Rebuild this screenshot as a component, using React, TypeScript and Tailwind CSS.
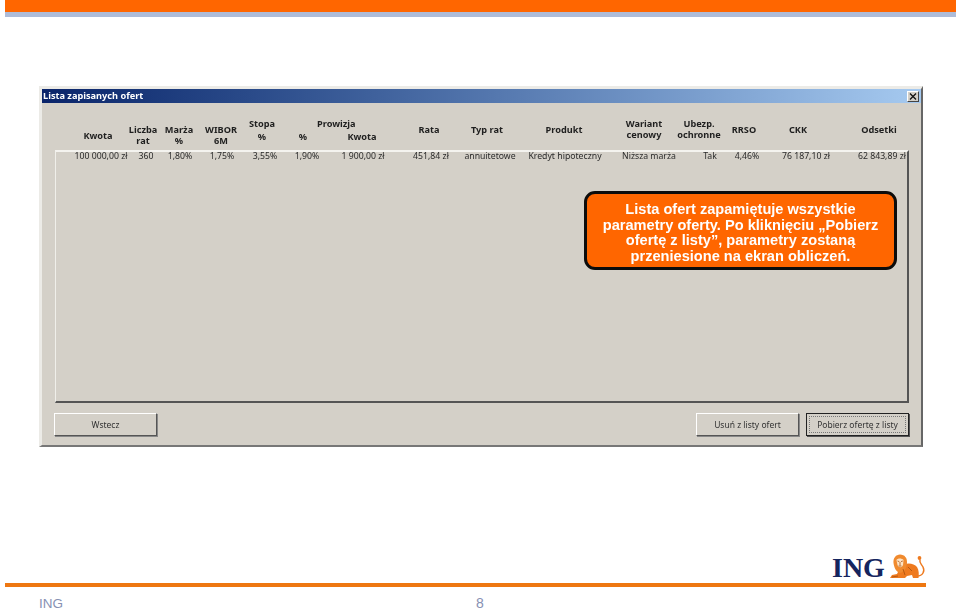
import React from 'react';

const headers = [
    { w: 'w-[56px]', pt: 'pt-[25px]', lines: ['Kwota'] },
    { w: 'w-[34px]', pt: 'pt-[19px]', lines: ['Liczba', 'rat'] },
    { w: 'w-[38px]', pt: 'pt-[19px]', lines: ['Marża', '%'] },
    { w: 'w-[46px]', pt: 'pt-[19px]', lines: ['WIBOR', '6M'] },
    { w: 'w-[36px]', pt: 'pt-[13px]', lines: ['Stopa', '%'], gap: true },
    { w: 'w-[46px]', pt: 'pt-[26px]', lines: ['%'] },
    { w: 'w-[72px]', pt: 'pt-[26px]', lines: ['Kwota'] },
    { w: 'w-[62px]', pt: 'pt-[19px]', lines: ['Rata'] },
    { w: 'w-[54px]', pt: 'pt-[19px]', lines: ['Typ rat'] },
    { w: 'w-[100px]', pt: 'pt-[19px]', lines: ['Produkt'] },
    { w: 'w-[60px]', pt: 'pt-[13px]', lines: ['Wariant', 'cenowy'] },
    { w: 'w-[50px]', pt: 'pt-[13px]', lines: ['Ubezp.', 'ochronne'] },
    { w: 'w-[40px]', pt: 'pt-[19px]', lines: ['RRSO'] },
    { w: 'w-[68px] mr-[8px]', pt: 'pt-[19px]', lines: ['CKK'] },
    { w: 'w-[78px]', pt: 'pt-[19px]', lines: ['Odsetki'] },
];

const cells = [
    { w: 'w-[60px]', text: '100 000,00 zł' },
    { w: 'w-[30px]', text: '360' },
    { w: 'w-[38px]', text: '1,80%' },
    { w: 'w-[46px]', text: '1,75%' },
    { w: 'w-[40px]', text: '3,55%' },
    { w: 'w-[44px]', text: '1,90%' },
    { w: 'w-[68px]', text: '1 900,00 zł' },
    { w: 'w-[68px]', text: '451,84 zł' },
    { w: 'w-[50px]', text: 'annuitetowe' },
    { w: 'w-[100px]', text: 'Kredyt hipoteczny' },
    { w: 'w-[68px]', text: 'Niższa marża' },
    { w: 'w-[54px]', text: 'Tak' },
    { w: 'w-[20px]', text: '4,46%' },
    { w: 'w-[98px]', text: '76 187,10 zł' },
    { w: 'w-[54px]', text: '62 843,89 zł' },
];

function WinButton({ label, className = '' }: { label: string; className?: string }) {
    return (
        <button className={`h-[23px] w-[103px] pt-[1px] bg-[#d4d0c8] border border-t-white border-l-white border-r-[#555] border-b-[#555] shadow-[1px_1px_0_#888] text-[8.5px] text-[#333] ${className}`}>
            {label}
        </button>
    );
}

function Lion() {
    return (
        <svg width="37" height="25" viewBox="0 0 37 25" className="ml-[4px] mb-[1px]">
            {/* body */}
            <path d="M1 24 L3 21 L8 20 L12 12 C17 8 25 9 28 13 C30 16 30 20 29.5 24 L24 24 L23 21 L18 22 L16 24 Z" fill="#ee7a1f" />
            {/* tail */}
            <path d="M28 22 C34 22 36 17 34 13 C32.5 10 30 9 31 5.5" stroke="#ee7a1f" strokeWidth="1.5" fill="none" />
            <circle cx="30.5" cy="4" r="1.9" fill="#ee7a1f" />
            {/* mane and face */}
            <path d="M4.5 9 C4 4 7 0.5 11 0.5 C15.5 0.5 18.5 4 18 9 C17.8 13 16 18 11 19 C7 18 5 13 4.5 9 Z" fill="#f08a2e" />
            <path d="M7.5 6 C8.5 4 13 4 14.5 6 L14 11 C13 14 9.5 14 8.5 11 Z" fill="#fde3c4" />
            <path d="M8.5 7 L10.3 7.6 M12 7.6 L13.8 7 M11 8 L11 11.5 M9.5 12 L12.5 12 M19 13 L23 17 M14 15 L16 21 M3 23 L9 22" stroke="#a8500f" strokeWidth="0.8" fill="none" />
        </svg>
    );
}

export default function App() {
    return (
        <div className="relative w-[960px] h-[610px] overflow-hidden bg-white flex flex-col font-['Liberation_Sans',sans-serif]">
            {/* Slide top bars */}
            <div className="ml-[5px] w-[951px] h-[12px] bg-[#ff6600] shrink-0" />
            <div className="ml-[5px] w-[951px] h-[5px] bg-[#aebcd8] shrink-0" />

            {/* Dialog */}
            <div className="relative ml-[39px] mt-[69px] w-[884px] h-[361px] shrink-0 bg-[#d4d0c8] border-t-[3px] border-l-[3px] border-r-2 border-b-2 border-t-[#ecebe7] border-l-[#ecebe7] border-r-[#666] border-b-[#777] flex flex-col font-['Noto_Sans',sans-serif] blur-[0.35px]">
                <div className="h-[14px] shrink-0 flex items-center justify-between bg-gradient-to-r from-[#0a246a] to-[#a6caf0] pl-[1px] pr-[2px]">
                    <span className="text-[9.2px] font-bold text-white leading-none">Lista zapisanych ofert</span>
                    <span className="w-[12px] h-[11px] bg-[#d4d0c8] border border-t-white border-l-white border-r-[#444] border-b-[#444] flex items-center justify-center">
                        <svg width="8" height="7" viewBox="0 0 8 7"><path d="M1 0.5 L7 6.5 M7 0.5 L1 6.5" stroke="#111" strokeWidth="1.3" /></svg>
                    </span>
                </div>

                {/* Column headers */}
                <div className="relative h-[47px] shrink-0 pt-[2px] pl-[28px] flex text-[9.2px] font-bold text-[#1f1f1f] leading-[11px] text-center">
                    {headers.map((h, i) => (
                        <div key={i} className={`${h.w} ${h.pt} shrink-0 flex flex-col items-center whitespace-nowrap ${h.gap ? 'gap-[2px]' : ''}`}>
                            {h.lines.map((l) => <span key={l}>{l}</span>)}
                        </div>
                    ))}
                    <span className="absolute left-[275px] top-[15px] leading-[11px]">Prowizja</span>
                </div>

                {/* Offer list */}
                <div className="ml-[13px] w-[854px] h-[253px] shrink-0 border-t-2 border-l border-r-2 border-b-2 border-t-[#f4f3ef] border-l-[#f0efea] border-r-[#555] border-b-[#555]">
                    <div className="flex pl-[15px] h-[9px] items-center text-[8.7px] text-[#2a2a2a] text-center whitespace-nowrap">
                        {cells.map((c, i) => (
                            <div key={i} className={`${c.w} shrink-0 flex justify-center`}>{c.text}</div>
                        ))}
                    </div>
                </div>

                {/* Buttons */}
                <div className="flex mt-[10px] ml-[12px] mr-[12px]">
                    <WinButton label="Wstecz" />
                    <WinButton label="Usuń z listy ofert" className="ml-auto" />
                    <div className="ml-[7px] h-[23px] w-[103px] border border-[#222] p-[2px] flex shadow-[1px_1px_0_#555]">
                        <div className="flex-1 pt-[1px] border border-dotted border-[#777] flex items-center justify-center text-[8.5px] text-[#333] whitespace-nowrap">Pobierz ofertę z listy</div>
                    </div>
                </div>

                {/* Callout */}
                <div className="absolute left-[542px] top-[102px] w-[313px] h-[79px] rounded-[11px] border-[3px] border-[#0c0c0c] bg-[#ff6600] text-center text-white font-['Liberation_Sans',sans-serif] font-bold text-[14.6px] leading-[15.7px] pt-[8px] whitespace-nowrap">
                    Lista ofert zapamiętuje wszystkie<br />
                    parametry oferty. Po kliknięciu „Pobierz<br />
                    ofertę z listy”, parametry zostaną<br />
                    przeniesione na ekran obliczeń.
                </div>
            </div>

            {/* Logo and footer */}
            <div className="mt-auto ml-[832px] flex items-end h-[24px] shrink-0">
                <span className="font-['Liberation_Serif',serif] font-bold text-[28px] leading-[24px] text-[#15255e]">ING</span>
                <Lion />
            </div>
            <div className="mt-[3px] ml-[5px] w-[921px] h-[4px] bg-[#ee7711] shrink-0" />
            <div className="h-[23px] shrink-0 pl-[39px] pt-[9px] flex items-start text-[13.5px] leading-[15px] text-[#8791b3]">
                <span className="w-[437px]">ING</span>
                <span className="text-[14px]">8</span>
            </div>
        </div>
    );
}
